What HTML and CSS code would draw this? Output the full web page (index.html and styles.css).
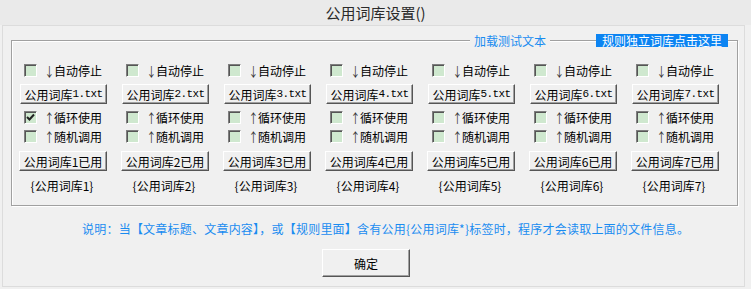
FILE: index.html
```html
<!DOCTYPE html>
<html lang="zh-CN">
<head>
<meta charset="utf-8">
<title>公用词库设置()</title>
<link rel="stylesheet" href="styles.css">
</head>
<body>
<div class="titlebar">公用词库设置()</div>
<div class="panel">
  <div class="group">
    <div class="legends">
      <span class="legend-link">加载测试文本</span>
      <span class="legend-hl">规则独立词库点击这里</span>
    </div>
    <div class="cols">
      <div class="col">
        <div class="cb-row"><span class="cb"></span><span class="arrow">↓</span><span class="cb-text">自动停止</span></div>
        <div class="btn btn-file">公用词库<span class="mono">1.txt</span></div>
        <div class="cb-row"><span class="cb checked"><svg width="9" height="9" viewBox="0 0 9 9"><polyline points="1,4 3.5,6.5 8,1.5" fill="none" stroke="#222" stroke-width="2"/></svg></span><span class="arrow">↑</span><span class="cb-text">循环使用</span></div>
        <div class="cb-row"><span class="cb"></span><span class="arrow">↑</span><span class="cb-text">随机调用</span></div>
        <div class="btn btn-used">公用词库1已用</div>
        <div class="tag">{公用词库1}</div>
      </div>
      <div class="col">
        <div class="cb-row"><span class="cb"></span><span class="arrow">↓</span><span class="cb-text">自动停止</span></div>
        <div class="btn btn-file">公用词库<span class="mono">2.txt</span></div>
        <div class="cb-row"><span class="cb"></span><span class="arrow">↑</span><span class="cb-text">循环使用</span></div>
        <div class="cb-row"><span class="cb"></span><span class="arrow">↑</span><span class="cb-text">随机调用</span></div>
        <div class="btn btn-used">公用词库2已用</div>
        <div class="tag">{公用词库2}</div>
      </div>
      <div class="col">
        <div class="cb-row"><span class="cb"></span><span class="arrow">↓</span><span class="cb-text">自动停止</span></div>
        <div class="btn btn-file">公用词库<span class="mono">3.txt</span></div>
        <div class="cb-row"><span class="cb"></span><span class="arrow">↑</span><span class="cb-text">循环使用</span></div>
        <div class="cb-row"><span class="cb"></span><span class="arrow">↑</span><span class="cb-text">随机调用</span></div>
        <div class="btn btn-used">公用词库3已用</div>
        <div class="tag">{公用词库3}</div>
      </div>
      <div class="col">
        <div class="cb-row"><span class="cb"></span><span class="arrow">↓</span><span class="cb-text">自动停止</span></div>
        <div class="btn btn-file">公用词库<span class="mono">4.txt</span></div>
        <div class="cb-row"><span class="cb"></span><span class="arrow">↑</span><span class="cb-text">循环使用</span></div>
        <div class="cb-row"><span class="cb"></span><span class="arrow">↑</span><span class="cb-text">随机调用</span></div>
        <div class="btn btn-used">公用词库4已用</div>
        <div class="tag">{公用词库4}</div>
      </div>
      <div class="col">
        <div class="cb-row"><span class="cb"></span><span class="arrow">↓</span><span class="cb-text">自动停止</span></div>
        <div class="btn btn-file">公用词库<span class="mono">5.txt</span></div>
        <div class="cb-row"><span class="cb"></span><span class="arrow">↑</span><span class="cb-text">循环使用</span></div>
        <div class="cb-row"><span class="cb"></span><span class="arrow">↑</span><span class="cb-text">随机调用</span></div>
        <div class="btn btn-used">公用词库5已用</div>
        <div class="tag">{公用词库5}</div>
      </div>
      <div class="col">
        <div class="cb-row"><span class="cb"></span><span class="arrow">↓</span><span class="cb-text">自动停止</span></div>
        <div class="btn btn-file">公用词库<span class="mono">6.txt</span></div>
        <div class="cb-row"><span class="cb"></span><span class="arrow">↑</span><span class="cb-text">循环使用</span></div>
        <div class="cb-row"><span class="cb"></span><span class="arrow">↑</span><span class="cb-text">随机调用</span></div>
        <div class="btn btn-used">公用词库6已用</div>
        <div class="tag">{公用词库6}</div>
      </div>
      <div class="col">
        <div class="cb-row"><span class="cb"></span><span class="arrow">↓</span><span class="cb-text">自动停止</span></div>
        <div class="btn btn-file">公用词库<span class="mono">7.txt</span></div>
        <div class="cb-row"><span class="cb"></span><span class="arrow">↑</span><span class="cb-text">循环使用</span></div>
        <div class="cb-row"><span class="cb"></span><span class="arrow">↑</span><span class="cb-text">随机调用</span></div>
        <div class="btn btn-used">公用词库7已用</div>
        <div class="tag">{公用词库7}</div>
      </div>
    </div>
  </div>
  <div class="note">说明：当【文章标题、文章内容】，或【规则里面】含有公用{公用词库*}标签时，程序才会读取上面的文件信息。</div>
  <div class="btn btn-ok">确定</div>
</div>
</body>
</html>
```

FILE: styles.css
```css
* { box-sizing: border-box; }
html, body {
  margin: 0;
  padding: 0;
  width: 751px;
  height: 289px;
  overflow: hidden;
  background: #f0f0f0;
  font-family: "Noto Sans CJK SC", "Microsoft YaHei", sans-serif;
  font-size: 12px;
  color: #000;
}
.titlebar {
  height: 25px;
  background: #eaeaea;
  text-align: center;
  font-size: 15px;
  line-height: 25px;
  color: #2a2a2a;
}
.panel {
  margin: 0 6px 0 2px;
  height: 262px;
  border: 1px solid #dcdcdc;
  background: #f0f0f0;
  display: flex;
  flex-direction: column;
  align-items: flex-start;
}
.group {
  position: relative;
  margin: 14px 6px 0 8px;
  width: 727px;
  height: 166px;
  border: 1px solid #a0a0a0;
  box-shadow: inset 1px 1px 0 #fff, 1px 1px 0 #fff;
  padding: 23px 0 0 8px;
}
.legends {
  position: absolute;
  top: -7px;
  right: 9px;
  display: flex;
  align-items: center;
  gap: 46px;
  height: 13px;
}
.legend-link {
  color: #1a8cf0;
  background: #f0f0f0;
  padding: 0 4px;
  line-height: 13px;
}
.legend-hl {
  color: #fff;
  background: #0c84f2;
  padding: 0 6px;
  line-height: 13px;
  height: 13px;
}
.cols {
  display: grid;
  grid-template-columns: repeat(7, 102px);
}
.col {
  display: flex;
  flex-direction: column;
  align-items: flex-start;
}
.cb-row {
  display: flex;
  align-items: center;
  height: 13px;
  margin-left: 4px;
  line-height: 13px;
}
.cb {
  width: 13px;
  height: 13px;
  background: #cfe8cf;
  border: 1px solid;
  border-color: #7f7f7f #fff #fff #7f7f7f;
  box-shadow: inset 1px 1px 0 #555;
  display: flex;
  align-items: center;
  justify-content: center;
}
.arrow {
  display: inline-block;
  width: 12px;
  margin: 0 -2px 0 6px;
  text-align: center;
  font-size: 13px;
  color: #333;
  transform: scaleX(0.75);
}
.cb-text { margin-left: 1px; }
.mono {
  font-family: "Liberation Mono", monospace;
  font-size: 11px;
  letter-spacing: -0.6px;
}
.btn {
  display: flex;
  align-items: center;
  justify-content: center;
  background: #f0f0f0;
  border: 1px solid;
  border-color: #fff #555 #555 #fff;
  box-shadow: inset -1px -1px 0 #a0a0a0;
  white-space: nowrap;
}
.btn-file {
  width: 87px;
  height: 20px;
  margin-top: 7px;
  margin-bottom: 7px;
}
.cb-row + .cb-row { margin-top: 6px; }
.btn-used {
  width: 88px;
  height: 20px;
  margin-top: 8px;
  margin-left: -1px;
}
.tag {
  width: 87px;
  text-align: center;
  margin-top: 8px;
  line-height: 14px;
  padding-right: 3px;
}
.note {
  margin: 15px 0 0 79px;
  color: #1a8cf0;
  line-height: 16px;
  white-space: nowrap;
  letter-spacing: 0.22px;
}
.btn-ok {
  margin: 12px 0 0 319px;
  width: 88px;
  height: 28px;
}
```
